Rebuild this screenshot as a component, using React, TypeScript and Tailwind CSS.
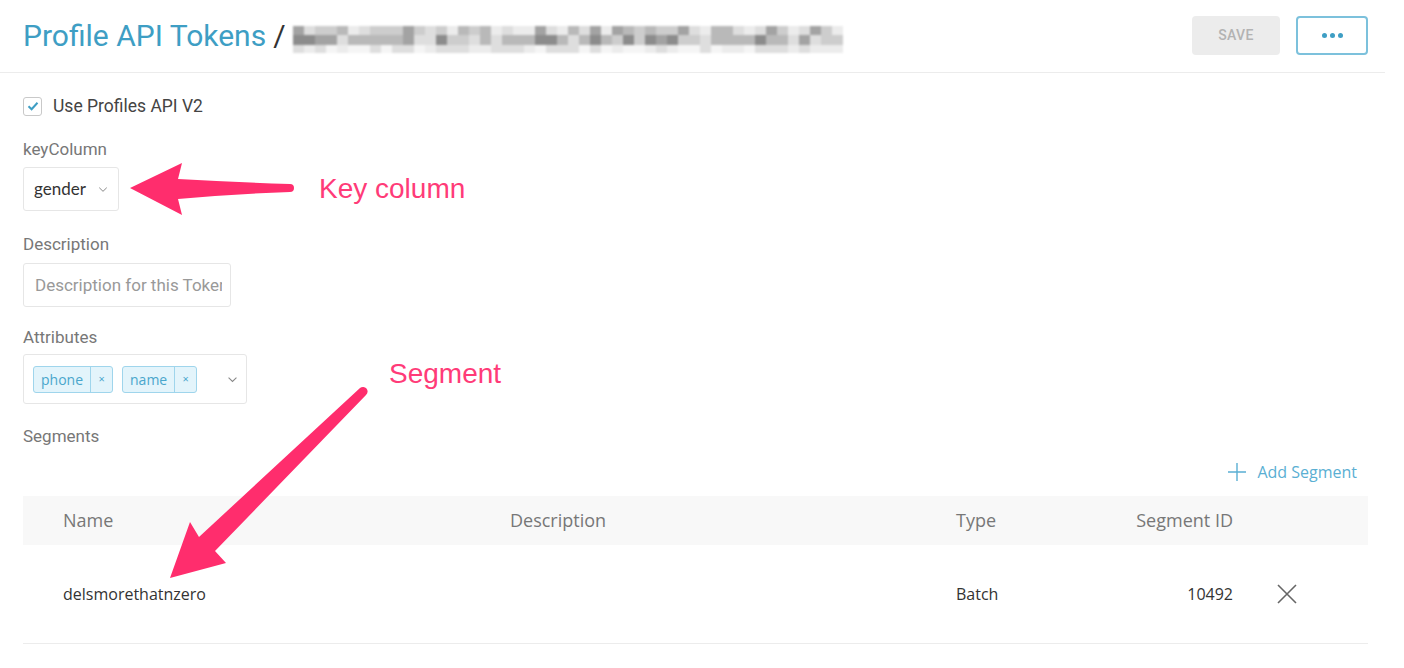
import React from "react";

const shades = ["bg-[#8c8c8c]", "bg-[#a3a3a3]", "bg-[#b9b9b9]", "bg-[#cdcdcd]", "bg-[#dedede]", "bg-[#ececec]", "bg-[#f5f5f5]"];

function noise(i: number, j: number) {
  const v = Math.sin(i * 12.9898 + j * 78.233) * 43758.5453;
  return v - Math.floor(v);
}

// pixelated (redacted) part of the title
function Mosaic() {
  const cols = 50;
  const rows = [
    { h: "h-[9px]", base: 1, spread: 5 },
    { h: "h-[10px]", base: 0, spread: 5 },
    { h: "h-[8px]", base: 4, spread: 3 },
  ];
  return (
    <div className="mt-[6px] flex flex-col blur-[1.2px]">
      {rows.map((r, ri) => (
        <div key={ri} className="flex">
          {Array.from({ length: cols }).map((_, i) => {
            const n = Math.floor(noise(i, ri + 1) * r.spread);
            const idx = Math.min(shades.length - 1, r.base + n);
            return <div key={i} className={`w-[11px] ${r.h} ${shades[idx]}`} />;
          })}
        </div>
      ))}
    </div>
  );
}

function Chevron({ className }: { className?: string }) {
  return (
    <svg viewBox="0 0 12 8" className={className} fill="none" stroke="currentColor" strokeWidth="1.2">
      <path d="M1.5 1.8 L6 6.2 L10.5 1.8" />
    </svg>
  );
}

function Tag({ label }: { label: string }) {
  return (
    <div className="flex h-[27px] items-stretch rounded-[3px] border border-[#9fd5ec] bg-[#e3f4fb] text-[14px] text-[#4aa6cc]">
      <span className="flex items-center px-[7px]">{label}</span>
      <span className="flex w-[22px] items-center justify-center border-l border-[#9fd5ec] text-[11px]">×</span>
    </div>
  );
}

export default function App() {
  return (
    <div className="relative h-[668px] w-[1404px] overflow-hidden bg-white font-['Roboto',sans-serif] text-[#444]">
      {/* header */}
      <div className="mr-[19px] flex h-[73px] items-center justify-between border-b border-[#ececec] pl-[23px] pr-[17px]">
        <div className="flex items-center">
          <span className="text-[30px] leading-none text-[#3e9ec4]">Profile API Tokens</span>
          <span className="mx-[7px] text-[30px] leading-none text-[#333]">/</span>
          <Mosaic />
        </div>
        <div className="flex items-center gap-[16px] pb-[1px]">
          <button className="h-[39px] w-[88px] rounded-[4px] bg-[#ececec] text-[14px] font-medium tracking-wide text-[#b3b3b3]">SAVE</button>
          <button className="flex h-[39px] w-[72px] items-center justify-center gap-[3px] rounded-[4px] border-2 border-[#7cc1dc]">
            <span className="h-[5px] w-[5px] rounded-full bg-[#3e9ec4]" />
            <span className="h-[5px] w-[5px] rounded-full bg-[#3e9ec4]" />
            <span className="h-[5px] w-[5px] rounded-full bg-[#3e9ec4]" />
          </button>
        </div>
      </div>

      {/* form */}
      <div className="pl-[23px] pr-[36px] pt-[23px]">
        <label className="flex h-[20px] items-center gap-[11px]">
          <span className="flex h-[19px] w-[19px] items-center justify-center rounded-[3px] border border-[#c9c9c9] bg-white">
            <svg viewBox="0 0 14 14" className="h-[14px] w-[14px]" fill="none" stroke="#3e9ec4" strokeWidth="2">
              <path d="M2.5 7.2 L5.6 10.2 L11.5 3.8" />
            </svg>
          </span>
          <span className="text-[17.5px] text-[#444]">Use Profiles API V2</span>
        </label>

        <div className="mt-[23px] text-[17px] leading-[20px] text-[#777]">keyColumn</div>
        <div className="mt-[8px] flex h-[44px] w-[96px] items-center justify-between rounded-[3px] border border-[#e6e6e6] pl-[10px] pr-[10px]">
          <span className="font-['Lato',sans-serif] text-[17px] text-[#333]">gender</span>
          <Chevron className="h-[7px] w-[10px] text-[#888]" />
        </div>

        <div className="mt-[23px] text-[17px] leading-[20px] text-[#777]">Description</div>
        <input
          className="mt-[9px] block h-[44px] w-[208px] rounded-[3px] border border-[#e6e6e6] pl-[11px] pr-[8px] text-[17px] text-[#333] outline-none placeholder:text-[#999]"
          placeholder="Description for this Token"
        />

        <div className="mt-[20px] text-[17px] leading-[20px] text-[#777]">Attributes</div>
        <div className="mt-[7px] flex h-[50px] w-[224px] items-center rounded-[3px] border border-[#e6e6e6] pl-[9px] pr-[8px] font-['Open_Sans',sans-serif]">
          <div className="flex gap-[9px]">
            <Tag label="phone" />
            <Tag label="name" />
          </div>
          <Chevron className="ml-auto h-[7px] w-[11px] text-[#888]" />
        </div>

        <div className="mt-[22px] text-[17px] leading-[20px] text-[#777]">Segments</div>

        <div className="mt-[16px] flex h-[20px] justify-end pr-[11px]">
          <div className="flex items-center gap-[10px] font-['Open_Sans',sans-serif] text-[16px] text-[#5aafd3]">
            <svg viewBox="0 0 20 20" className="h-[20px] w-[20px]" fill="none" stroke="currentColor" strokeWidth="1.4">
              <path d="M10 1 V19 M1 10 H19" />
            </svg>
            <span>Add Segment</span>
          </div>
        </div>

        {/* table */}
        <div className="mt-[14px] font-['Open_Sans',sans-serif]">
          <div className="grid h-[49px] grid-cols-[447px_446px_180px_97px_1fr] items-center bg-[#f8f8f8] pl-[40px] text-[18px] text-[#777]">
            <span>Name</span>
            <span>Description</span>
            <span>Type</span>
            <span className="text-right">Segment ID</span>
            <span />
          </div>
          <div className="grid h-[99px] grid-cols-[447px_446px_180px_97px_1fr] items-center border-b border-[#ececec] pl-[40px] text-[16px] text-[#333]">
            <span>delsmorethatnzero</span>
            <span />
            <span>Batch</span>
            <span className="text-right">10492</span>
            <span className="pl-[43px]">
              <svg viewBox="0 0 22 22" className="h-[22px] w-[22px]" fill="none" stroke="#666" strokeWidth="1.6">
                <path d="M2 2 L20 20 M20 2 L2 20" />
              </svg>
            </span>
          </div>
        </div>
      </div>

      {/* annotations */}
      <svg className="pointer-events-none absolute inset-0 h-[668px] w-[1404px]" viewBox="0 0 1404 668">
        <path
          d="M130,188 L182,163 L178,179 Q232,182 290,184 A4,4 0 0 1 290,192 Q232,194 178,199 L182,215 Z"
          fill="#ff2d6d"
        />
        <path
          d="M170,578 L190,522 L199,537 L360,388 A4,4 0 0 1 366,395 L215,551 L226,563 Z"
          fill="#ff2d6d"
        />
      </svg>
      <span className="absolute left-[319px] top-[171px] font-['Liberation_Sans',sans-serif] text-[28px] leading-[36px] text-[#ff3b78]">
        Key column
      </span>
      <span className="absolute left-[389px] top-[356px] font-['Liberation_Sans',sans-serif] text-[28px] leading-[36px] text-[#ff3b78]">
        Segment
      </span>
    </div>
  );
}
